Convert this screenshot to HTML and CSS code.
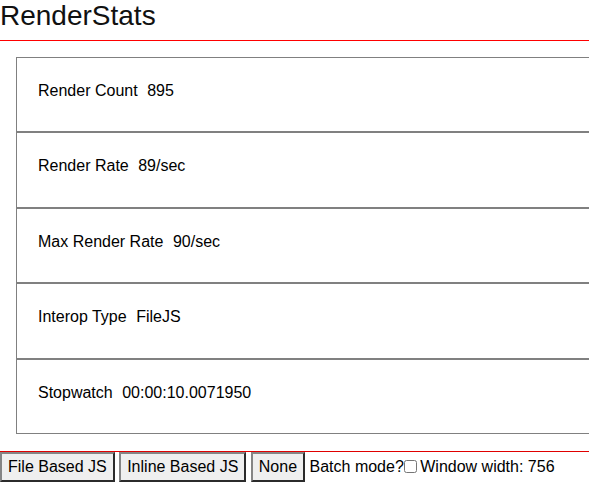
FILE: index.html
```html
<!DOCTYPE html>
<html lang="en">
<head>
<meta charset="utf-8">
<title>RenderStats</title>
<link rel="stylesheet" href="styles.css">
</head>
<body>
<div class="page">
  <h1 class="title">RenderStats</h1>
  <div class="stats">
    <div class="stat"><span class="label">Render Count</span><span class="value">895</span></div>
    <div class="stat"><span class="label">Render Rate</span><span class="value">89/sec</span></div>
    <div class="stat"><span class="label">Max Render Rate</span><span class="value">90/sec</span></div>
    <div class="stat"><span class="label">Interop Type</span><span class="value">FileJS</span></div>
    <div class="stat"><span class="label">Stopwatch</span><span class="value">00:00:10.0071950</span></div>
  </div>
  <div class="footer">
    <button class="btn" type="button">File Based JS</button>
    <button class="btn" type="button">Inline Based JS</button>
    <button class="btn" type="button">None</button>
    <span class="batch">Batch mode?<input class="check" type="checkbox"></span>
    <span class="width">Window width: 756</span>
  </div>
</div>
</body>
</html>
```
FILE: styles.css
```css
html, body {
  margin: 0;
  padding: 0;
  overflow: hidden;
  background: #ffffff;
}

body {
  font-family: "Liberation Sans", Arial, sans-serif;
  font-size: 16px;
  color: #000000;
}

.page {
  width: 756px;
}

.title {
  margin: 0;
  font-size: 28px;
  font-weight: normal;
  line-height: 32px;
  padding-bottom: 8px;
  border-bottom: 1px solid #ff0000;
  color: #111111;
}

.stats {
  margin: 16px 0 17px 16px;
}

.stat {
  display: flex;
  gap: 9.5px;
  border: 1px solid #808080;
  padding: 24px 21px 31px;
  line-height: 18.4px;
}

.footer {
  border-top: 1px solid #e00000;
  line-height: 18.4px;
}

.btn {
  font-family: "Liberation Sans", Arial, sans-serif;
  font-size: 16px;
  line-height: 18.4px;
  color: #000000;
  background: #efefef;
  border-style: solid;
  border-width: 2px;
  border-color: #858585 #2b2b2b #2b2b2b #858585;
  padding: 4px 6px;
  margin: 0;
}

.check {
  width: 13px;
  height: 13px;
  margin: 0 -1px 0 0;
  vertical-align: -1px;
}
```
